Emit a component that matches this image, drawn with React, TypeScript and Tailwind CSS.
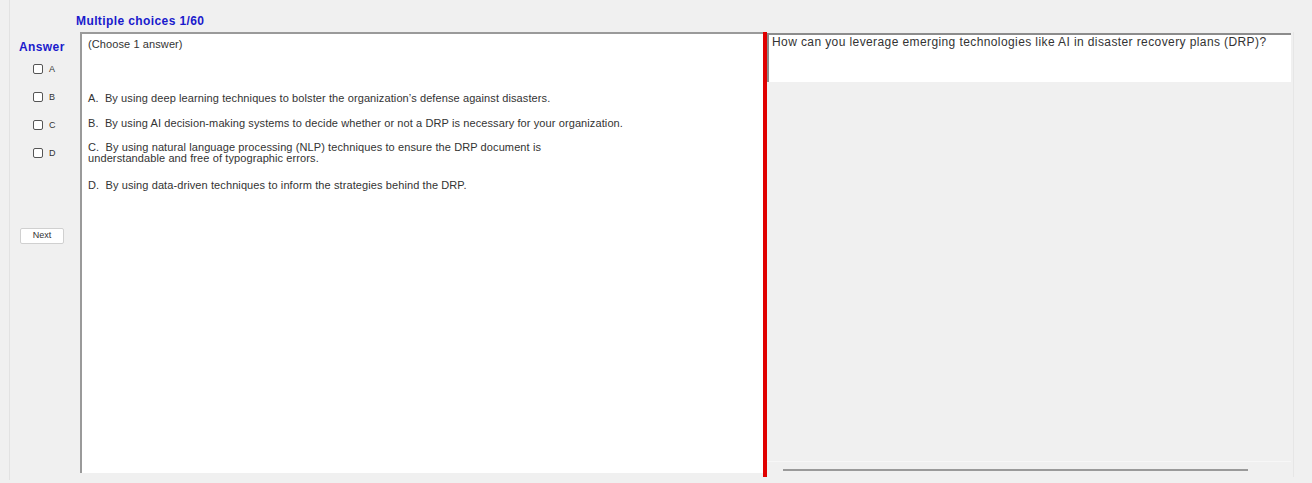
import React from "react";

const Check = ({ label, mt }: { label: string; mt: string }) => (
  <div className={`flex items-center gap-[6px] pl-[23px] ${mt}`}>
    <div className="w-[10px] h-[10px] border border-[#555] rounded-[2px] bg-white" />
    <span className="text-[9px] text-[#333] leading-none">{label}</span>
  </div>
);

export default function App() {
  return (
    <div
      className="w-[1312px] h-[483px] bg-[#f0f0f0] overflow-hidden"
      style={{ fontFamily: '"Liberation Sans", Arial, sans-serif' }}
    >
      <div className="ml-[9px] h-[480px] border-l border-[#e2e2e2] flex flex-col">
        <div className="h-[32px] pl-[66px] pt-[8px]">
          <span className="text-[12px] font-bold text-[#1a1acc] tracking-[0.4px]">Multiple choices 1/60</span>
        </div>
        <div className="flex h-[445px]">
          <div className="w-[70px] flex flex-col">
            <div className="pl-[9px] pt-[9px] text-[12px] font-bold text-[#1a1acc] leading-none tracking-[0.4px]">Answer</div>
            <Check label="A" mt="mt-[11px]" />
            <Check label="B" mt="mt-[18px]" />
            <Check label="C" mt="mt-[18px]" />
            <Check label="D" mt="mt-[18px]" />
            <div className="ml-[10px] mt-[70px] w-[44px] h-[16px] bg-white border border-[#d0d0d0] rounded-[2px] flex items-center justify-center text-[9px] text-[#333]">
              Next
            </div>
          </div>
          <div className="w-[683px] h-[441px] bg-white border-l-2 border-t-2 border-[#9a9a9a] pl-[6px] pt-[5px] text-[11px] text-[#333] leading-[11px] tracking-[0.1px]">
            <div>(Choose 1 answer)</div>
            <div className="mt-[43px]">A.&nbsp; By using deep learning techniques to bolster the organization’s defense against disasters.</div>
            <div className="mt-[14px]">B.&nbsp; By using AI decision-making systems to decide whether or not a DRP is necessary for your organization.</div>
            <div className="mt-[13px]">
              C.&nbsp; By using natural language processing (NLP) techniques to ensure the DRP document is
              <br />
              understandable and free of typographic errors.
            </div>
            <div className="mt-[16px]">D.&nbsp; By using data-driven techniques to inform the strategies behind the DRP.</div>
          </div>
          <div className="w-[4px] h-[445px] bg-[#e00000]" />
          <div className="w-[524px] h-[445px] flex flex-col">
            <div className="h-[49px] mt-[1px] bg-white border-l-2 border-t-2 border-[#8c8c8c] pl-[3px] pt-[1px] text-[12px] text-[#333] leading-[13px] tracking-[0.4px]">
              How can you leverage emerging technologies like AI in disaster recovery plans (DRP)?
            </div>
            <div className="flex-1" />
            <div className="h-[16px] border-t border-[#f7f7f7] flex items-center pl-[16px]">
              <div className="w-[465px] h-[2px] bg-[#9a9a9a]" />
            </div>
          </div>
          <div className="ml-[2px] w-[12px] border-l border-[#e6e6e6]" />
        </div>
      </div>
    </div>
  );
}
